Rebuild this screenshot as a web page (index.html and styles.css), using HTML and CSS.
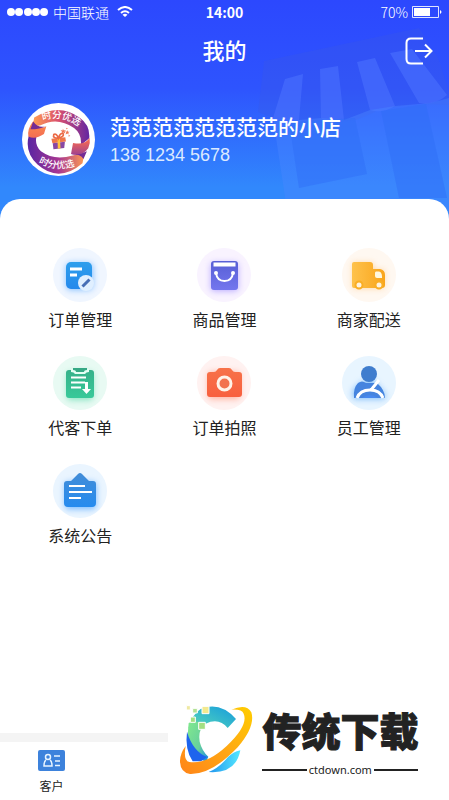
FILE: index.html
```html
<!DOCTYPE html>
<html lang="zh-CN">
<head>
<meta charset="utf-8">
<meta name="viewport" content="width=device-width, initial-scale=1">
<title>我的</title>
<link rel="stylesheet" href="styles.css">
</head>
<body>
<header class="hero">
  <svg class="hero-art" viewBox="0 0 224 210" aria-hidden="true">
    <path fill="#3a58e6" opacity=".3" d="M39 61L194 28L214 60L224 92V105L196 104L160 108L151 109L150 112L131 120L100 122L81 121L73 120L48 118L33 112Z"/>
    <path fill="#4d72ff" opacity=".55" d="M60 79L78 74L74 120Q62 126 48 118ZM95 69L113 66L119 120Q106 126 96 118ZM132 62L150 58L170 106Q157 114 145 110ZM165 53L187 49L222 95Q210 106 194 103Z"/>
    <path fill="#4c88ff" opacity=".4" d="M48 118Q62 126 74 120L96 118L119 120L145 110L170 106L205 103L224 98V210H62Z"/>
    <path fill="#2f6cf6" opacity=".45" d="M64 122L130 118L142 174L74 188ZM156 111L201 104L222 198H174Z"/>
  </svg>
  <div class="status">
    <div class="carrier">
      <svg width="42" height="10" viewBox="0 0 42 10" fill="#fff" aria-hidden="true"><circle cx="4" cy="5" r="4"/><circle cx="12" cy="5" r="4"/><circle cx="21" cy="5" r="4"/><circle cx="29" cy="5" r="4"/><circle cx="37" cy="5" r="4"/></svg>
      <span>中国联通</span>
      <svg class="wifi" width="16" height="12" viewBox="0 0 16 12" fill="none" stroke="#fff" stroke-width="2" aria-hidden="true"><path d="M1 4Q8-2 15 4M4 7Q8 3.500 12 7"/><path fill="#fff" stroke="none" d="M5.500 8.700Q8 7 10.500 8.700L8 11Z"/></svg>
    </div>
    <strong>14:00</strong>
    <div class="battery">
      <span>70%</span>
      <svg width="30" height="12" viewBox="0 0 30 12" aria-hidden="true"><path fill="none" stroke="#dfe4ff" d="M.5.5H26.500V11.500H.5Z"/><path fill="#fff" d="M2 2H18V10H2ZM28 4Q31 6 28 8Z"/></svg>
    </div>
  </div>
  <div class="title-row">
    <h1>我的</h1>
    <button class="logout" type="button" aria-label="退出登录">
      <svg width="28" height="28" viewBox="0 0 28 28" fill="none" stroke="#fff" stroke-width="2" aria-hidden="true"><path d="M18 1.500H6Q1.500 1.500 1.500 6V22Q1.500 26.500 6 26.500H18M10 14H26M20 7.500L26.500 14L20 20.500"/></svg>
    </button>
  </div>
  <section class="profile">
    <svg class="avatar" viewBox="0 0 216 216" role="img" aria-label="时分优选">
      <defs>
        <linearGradient id="ribTop"><stop stop-color="#ff9c50"/><stop offset=".45" stop-color="#d9506f"/><stop offset="1" stop-color="#6426a2"/></linearGradient>
        <linearGradient id="ribBottom"><stop stop-color="#5a25a2"/><stop offset=".55" stop-color="#a83791"/><stop offset="1" stop-color="#ff9c50"/></linearGradient>
        <linearGradient id="ribFold" x2="0" y2="1"><stop stop-color="#ff8d4b"/><stop offset=".6" stop-color="#ef6657"/><stop offset="1" stop-color="#9e4090"/></linearGradient>
        <path id="arcTop" d="M62 52Q122 28 186 84"/>
        <path id="arcBottom" d="M49 176Q104 210 178 178"/>
      </defs>
      <circle cx="108" cy="108" r="108" fill="#fff"/>
      <path fill="url(#ribTop)" d="M33 61L36 43Q110-2 171 44Q202 66 199 104L174 125Q178 92 154 74Q105 40 55 66Q44 70 33 61Z"/>
      <path fill="url(#ribBottom)" d="M20 97L45 90Q34 123 56 143Q96 172 150 155L185 147L179 178Q109 238 46 182Q7 145 20 97Z"/>
      <path fill="url(#ribFold)" d="M33 54Q15 76 19 99Q39 109 65 92L72 69Q54 81 33 54ZM200 103Q187 126 151 118L145 151Q177 161 196 134Q203 119 200 103Z"/>
      <path fill="#742b94" d="M33 55Q49 77 72 68Q53 78 25 78ZM145 151Q172 155 192 143L182 166Q172 150 145 151Z"/>
      <text class="seal"><textPath href="#arcTop">时分优选</textPath></text>
      <text class="seal"><textPath href="#arcBottom">时分优选</textPath></text>
      <path fill="#ef774a" d="M87 106L128 101L130 114L90 119Z"/>
      <path fill="#8848a4" d="M91 119L127 115L125 133L93 137Z"/>
      <path fill="#ffc33e" d="M105 104L112 103L114 134L106 135Z"/>
      <path fill="none" stroke="#eb6a46" stroke-width="5" d="M108 104Q90 105 94 93Q102 89 108 104Q113 87 122 91Q125 100 108 104"/>
      <path fill="#ef7654" d="M121 76L124 81L130 80L126 84L128 90L122 87L117 91L118 84L114 80L120 81ZM134 80L136 85L141 85L137 88L138 93L134 90L129 93L131 87L127 84L133 84ZM138 95L143 97L138 100ZM131 73L136 76L131 78Z"/>
    </svg>
    <div class="profile-text">
      <h2>范范范范范范范范的小店</h2>
      <p>138 1234 5678</p>
    </div>
  </section>
</header>

<main class="sheet">
  <nav class="menu" aria-label="功能">
    <a class="item blue" href="#orders">
      <svg viewBox="0 0 54 54" aria-hidden="true"><defs><linearGradient id="gBlue" x2="0" y2="1"><stop stop-color="#2d9eec"/><stop offset="1" stop-color="#2589ec"/></linearGradient></defs><rect class="glow" x="13" y="15" width="27" height="27" rx="5" fill="#84bfff"/><rect x="13" y="14" width="26" height="27" rx="5" fill="url(#gBlue)"/><path stroke="#fff" stroke-width="3" d="M17 21H29M17 27H24"/><circle cx="33" cy="35" r="8" fill="#e0efff"/><path d="M29.500 38.500L36.500 31.500" stroke="#466eb5" stroke-width="3"/></svg>
      <span>订单管理</span></a>
    <a class="item purple" href="#goods">
      <svg viewBox="0 0 54 54" aria-hidden="true"><defs><linearGradient id="gPurple" x2="0" y2="1"><stop stop-color="#575fd5"/><stop offset="1" stop-color="#7476ee"/></linearGradient></defs><rect class="glow" x="14" y="15" width="27" height="28" rx="3" fill="#b8a9ff"/><rect x="14" y="13" width="27" height="29" rx="3" fill="url(#gPurple)"/><path d="M16.500 16.500H38.500" stroke="#fff" stroke-width="4"/><path d="M19 25Q20 33 27.500 33Q35 33 36 25" fill="none" stroke="#fff" stroke-width="2"/><circle cx="19" cy="25" r="2" fill="#fff"/><circle cx="36" cy="25" r="2" fill="#fff"/></svg>
      <span>商品管理</span></a>
    <a class="item amber" href="#delivery">
      <svg viewBox="0 0 54 54" aria-hidden="true"><defs><linearGradient id="gAmber"><stop stop-color="#fec24c"/><stop offset="1" stop-color="#f9a51b"/></linearGradient></defs><path class="glow" d="M11 15H31V22H42V40H11Z" fill="#ffd39a"/><path fill="url(#gAmber)" d="M12 14H28Q31 14 31 17V21H38Q43 22 43 27V37Q43 40 40 40H12Q10 40 10 38V16Q10 14 12 14Z"/><path fill="#fff8df" d="M34 23.500H37Q40 24 40 29V30H35Q33 30 33 28V25Q33 23.500 34 23.500Z"/><circle cx="17" cy="37" r="3.500" fill="#fff3df" stroke="#f9ae25" stroke-width="2"/><circle cx="37" cy="37" r="3.500" fill="#fff3df" stroke="#f9ae25" stroke-width="2"/></svg>
      <span>商家配送</span></a>
    <a class="item green" href="#proxy-order">
      <svg viewBox="0 0 54 54" aria-hidden="true"><defs><linearGradient id="gGreen" x2="0" y2="1"><stop stop-color="#36b18a"/><stop offset="1" stop-color="#38c999"/></linearGradient></defs><rect class="glow" x="14" y="16" width="26" height="28" rx="4" fill="#86e4c1"/><rect x="13" y="14" width="28" height="28" rx="3" fill="url(#gGreen)"/><path d="M18 13H36V16Q33 16 32 18H22Q21 16 18 16Z" fill="#e4fff5"/><path d="M20 12H34V14Q31 14 31 16H23Q23 14 20 14Z" fill="#36a985"/><path d="M18 21.500H33M18 26.500H32M18 31.500H28" stroke="#fff" stroke-width="2"/><path d="M33.500 26V34" stroke="#fff" stroke-width="3"/><path fill="#fff" d="M29 33H38L33.500 38Z"/></svg>
      <span>代客下单</span></a>
    <a class="item red" href="#photos">
      <svg viewBox="0 0 54 54" aria-hidden="true"><defs><linearGradient id="gRed" x2="0" y2="1"><stop stop-color="#f77349"/><stop offset="1" stop-color="#f8603f"/></linearGradient></defs><rect class="glow" x="11" y="16" width="32" height="27" rx="4" fill="#ffb19e"/><path fill="url(#gRed)" d="M13 16H17Q19 16 20 14Q21 12 23 12H32Q34 12 35 14Q36 16 38 16H42Q45 16 45 19V38Q45 41 42 41H13Q10 41 10 38V19Q10 16 13 16Z"/><circle cx="27.500" cy="27.500" r="6.500" fill="#f2734e" stroke="#fff3e8" stroke-width="3"/></svg>
      <span>订单拍照</span></a>
    <a class="item sky" href="#staff">
      <svg viewBox="0 0 54 54" aria-hidden="true"><path class="glow" d="M11 43V34L20 26L30 23L43 38V43Z" fill="#7fbdfa"/><circle cx="27" cy="18" r="8" fill="#3f7dce"/><path fill="#4584df" d="M12 42Q11 32 16 27Q20 24 24 27H35Q43 34 43 42Z"/><path fill="none" stroke="#fff" stroke-width="3" d="M15 42Q18 34 28 34Q38 34 41 42M29 34L37 24"/><path fill="#4688ef" d="M20 42Q28 36 36 42Z"/></svg>
      <span>员工管理</span></a>
    <a class="item azure" href="#notices">
      <svg viewBox="0 0 54 54" aria-hidden="true"><defs><linearGradient id="gAzure" x2="0" y2="1"><stop stop-color="#438dd7"/><stop offset="1" stop-color="#258bef"/></linearGradient></defs><rect class="glow" x="12" y="18" width="31" height="27" rx="4" fill="#76b9ff"/><path fill="url(#gAzure)" d="M14 17H18L25 10Q27 8 29 10L36 17H40Q43 17 43 20V39Q43 43 39 43H15Q11 43 11 39V20Q11 17 14 17Z"/><path stroke="#fff" stroke-width="2" d="M16 22H32M16 28H39M16 34H28"/></svg>
      <span>系统公告</span></a>
  </nav>
</main>

<footer class="footer">
  <nav class="tabbar" aria-label="底部导航">
    <a class="tab" href="#customers">
      <svg width="27" height="21" viewBox="0 0 27 21" fill="none" stroke="#e8f4ff" stroke-width="1.500" aria-hidden="true"><rect width="27" height="21" rx="2" fill="#3d82dc" stroke="none"/><circle cx="10" cy="7" r="2.500"/><path d="M8 10Q6 11 6 16H14Q14 11 12 10M16 6H22M17 11H22M17 15.500H22"/></svg>
      <span>客户</span>
    </a>
  </nav>
  <aside class="brand">
    <svg class="brand-mark" viewBox="534 24 228 222" aria-hidden="true">
      <defs>
        <linearGradient id="cTop" x1="0" y1="1" x2="1" y2="0"><stop stop-color="#77df8c"/><stop offset=".4" stop-color="#41c4c5"/><stop offset="1" stop-color="#159bdd"/></linearGradient>
        <linearGradient id="cLeft" x1="0" y1="0" x2="1" y2="1"><stop stop-color="#82e98d"/><stop offset=".6" stop-color="#66cf9d"/><stop offset="1" stop-color="#1689e9"/></linearGradient>
        <linearGradient id="ring" x1="0" y1="1" x2="1" y2="0"><stop stop-color="#ff8418"/><stop offset=".55" stop-color="#ffab13"/><stop offset="1" stop-color="#ffcd00"/></linearGradient>
        <linearGradient id="tail"><stop stop-color="#2295ee"/><stop offset="1" stop-color="#54e8ff"/></linearGradient>
      </defs>
      <path fill="url(#cTop)" d="M602 42Q660 18 708 72L683 99Q657 67 617 86L596 110L565 100Q574 60 602 42Z"/>
      <path fill="url(#cLeft)" d="M566 84Q580 74 610 86Q594 112 599 140Q606 168 625 185L619 199Q584 197 563 121Z"/>
      <path fill="#1e64ed" d="M561 110Q579 170 622 186L603 199H578Q554 163 561 110Z"/>
      <path fill="url(#ring)" d="M557 153Q549 196 568 201Q620 209 680 153Q746 91 731 56Q726 42 694 44Q739 24 754 52Q767 94 713 157Q635 239 570 237Q540 232 540 197Q541 174 557 153Z"/>
      <path fill="url(#tail)" d="M721 166Q708 237 626 231Q656 220 684 186Q699 171 721 166Z"/>
      <g stroke="#fff" stroke-width="3"><path fill="#f2e98e" d="M606 34H627V56H606Z"/><path fill="#a4df82" d="M571 66H586V82H571ZM596 82H616V103H596Z"/><path fill="#b2e194" d="M578 40H592V54H578Z"/><path fill="#efe9a2" d="M559 32H571V45H559Z"/></g>
    </svg>
    <div class="brand-text">
      <strong>传统下载</strong>
      <span class="brand-url">ctdown.com</span>
    </div>
  </aside>
</footer>
</body>
</html>
```
FILE: styles.css
```css
* { box-sizing: border-box; }

body {
  margin: 0;
  min-height: 100vh;
  display: flex;
  flex-direction: column;
  background: #fff;
  color: #222;
  font-family: "Noto Sans CJK SC", "Noto Sans", sans-serif;
}

h1, h2, p { margin: 0; }
svg { display: block; }
a { color: inherit; text-decoration: none; }

.hero {
  position: relative;
  padding-bottom: 45px;
  background: linear-gradient(#2c48fe 0%, #2e54fe 40%, #3188fc 85%);
  color: #fff;
}

.hero-art {
  position: absolute;
  top: 0;
  right: 0;
  width: 224px;
  height: 210px;
}

.status {
  position: relative;
  display: grid;
  grid-template-columns: 1fr auto 1fr;
  align-items: center;
  height: 24px;
  padding: 0 7px;
  font-size: 14px;
  line-height: 24px;
}

.status strong { font-weight: 700; }

.carrier, .battery {
  display: flex;
  align-items: center;
  gap: 4px;
  font-weight: 300;
}

.carrier .wifi { margin-left: 4px; }
.battery { justify-content: flex-end; }

.title-row {
  position: relative;
  display: grid;
  grid-template-columns: 1fr auto 1fr;
  align-items: center;
  height: 54px;
  padding: 0 16px;
}

.title-row h1 {
  grid-column: 2;
  padding-bottom: 4px;
  font-size: 22px;
  line-height: 32px;
  font-weight: 500;
}

.logout {
  justify-self: end;
  padding: 0;
  border: 0;
  background: none;
  cursor: pointer;
}

.profile {
  position: relative;
  display: flex;
  align-items: center;
  gap: 15px;
  padding: 25px 22px 0;
}

.avatar {
  flex: none;
  width: 73px;
  height: 73px;
}

.seal {
  fill: #fff;
  font-size: 28px;
  font-weight: 500;
}

.profile h2 {
  font-size: 21px;
  line-height: 30px;
  font-weight: 500;
}

.profile p {
  font-family: "Liberation Sans", sans-serif;
  font-size: 18px;
  line-height: 28px;
  color: #dceaff;
}

.sheet {
  position: relative;
  flex: 1;
  margin-top: -22px;
  padding: 49px 8px 24px;
  border-radius: 20px 20px 0 0;
  background: #fff;
}

.menu {
  display: grid;
  grid-template-columns: repeat(3, 1fr);
  row-gap: 25px;
}

.item {
  display: flex;
  flex-direction: column;
  align-items: center;
  gap: 4px;
  font-size: 16px;
  line-height: 24px;
}

.item svg {
  width: 54px;
  height: 54px;
  margin-bottom: 1px;
  border-radius: 50%;
}

.glow { filter: blur(3px); }

.blue svg { background: #f0f6ff; }
.purple svg { background: #f9f3ff; }
.amber svg { background: #fff8f1; }
.green svg { background: #e8faf3; }
.red svg { background: #fff2f1; }
.sky svg { background: #e8f5ff; }
.azure svg { background: #eaf5ff; }

.footer {
  display: grid;
  grid-template-columns: 3fr 5fr;
  align-items: end;
  background: #fff;
}

.tabbar {
  height: 67px;
  padding: 8px 38px 0;
  border-top: 9px solid #f4f4f4;
}

.tab {
  display: inline-flex;
  flex-direction: column;
  align-items: center;
  gap: 6px;
  font-size: 12px;
  line-height: 18px;
}

.brand {
  display: flex;
  gap: 8px;
  height: 105px;
  padding: 8px 0 0 10px;
}

.brand-mark {
  flex: none;
  width: 76px;
  height: 74px;
}

.brand-text {
  display: flex;
  flex-direction: column;
  gap: 8px;
  width: 156px;
}

.brand-text strong {
  font-size: 39px;
  line-height: 52px;
  font-weight: 900;
  white-space: nowrap;
  -webkit-text-stroke: 1px #222;
}

.brand-url {
  display: flex;
  align-items: center;
  gap: 2px;
  font-family: "Noto Sans", sans-serif;
  font-size: 11px;
  line-height: 14px;
}

.brand-url::before, .brand-url::after {
  content: "";
  flex: 1;
  height: 2px;
  background: #222;
}
```
